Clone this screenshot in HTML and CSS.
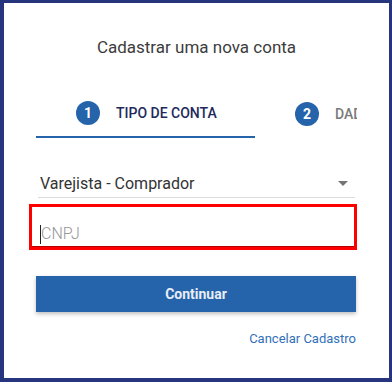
FILE: index.html
```html
<!DOCTYPE html>
<html lang="pt-BR">
<head>
<meta charset="utf-8">
<title>Cadastrar uma nova conta</title>
<link rel="stylesheet" href="styles.css">
</head>
<body>
<div class="frame">
  <div class="column">
    <h1 class="title">Cadastrar uma nova conta</h1>
    <div class="steps">
      <div class="step active">
        <span class="num">1</span>
        <span class="label">TIPO DE CONTA</span>
      </div>
      <div class="step">
        <span class="num">2</span>
        <span class="label muted">DADOS DA EMPRESA</span>
      </div>
    </div>
    <div class="select">
      <span class="value">Varejista - Comprador</span>
      <span class="arrow"></span>
    </div>
    <div class="field-box">
      <span class="caret"></span><span class="placeholder">CNPJ</span>
    </div>
    <button class="btn" type="button">Continuar</button>
    <div class="cancel-row"><a class="cancel" href="#">Cancelar Cadastro</a></div>
  </div>
</div>
</body>
</html>
```

FILE: styles.css
```css
* { box-sizing: border-box; }
html, body { margin: 0; padding: 0; background: #fff; }
body { font-family: Roboto, "Noto Sans", Arial, sans-serif; }

.frame {
  width: 392px;
  height: 382px;
  border: 4px solid #27357f;
  border-top-width: 3px;
  border-right-width: 3px;
  background: #fff;
  padding: 34px 31px 0 32px;
}

.column {
  width: 321px;
  display: flex;
  flex-direction: column;
}

.title {
  margin: 0;
  font-size: 17px;
  line-height: 20px;
  font-weight: 400;
  color: #3c3c3c;
  text-align: center;
}

.steps {
  margin-top: 34px;
  display: flex;
  overflow: hidden;
  width: 321px;
}

.step {
  flex: none;
  width: 219px;
  height: 47px;
  display: flex;
  align-items: center;
  padding-left: 40px;
  padding-bottom: 1px;
}

.step.active { border-bottom: 2px solid #2563aa; }

.num {
  width: 24px;
  height: 24px;
  border-radius: 50%;
  background: #2563aa;
  color: #fff;
  font-size: 14px;
  font-weight: 700;
  display: flex;
  align-items: center;
  justify-content: center;
  flex: none;
}

.label {
  margin-left: 16px;
  font-size: 14px;
  font-weight: 500;
  color: #1e2a5c;
  white-space: nowrap;
}
.label.muted { color: #7a7a7a; }

.select {
  margin: 36px 2px 0;
  display: flex;
  align-items: center;
  justify-content: space-between;
  padding: 0 7px 3px 2px;
  border-bottom: 1px solid #dcdcdc;
}
.value {
  font-size: 16px;
  line-height: 20px;
  color: #333;
}
.arrow {
  width: 0;
  height: 0;
  border-left: 5px solid transparent;
  border-right: 5px solid transparent;
  border-top: 5px solid #757575;
  margin-top: -1px;
}

.field-box {
  margin: 6px 0 0 -7px;
  width: 328px;
  height: 46px;
  border: 3px solid #ff0000;
  box-shadow: inset 0 -1px 0 #b00000;
  padding: 17px 0 0 8px;
  display: flex;
  align-items: flex-start;
}
.caret {
  width: 1px;
  height: 19px;
  background: #222;
  margin-top: 1px;
}
.placeholder {
  font-size: 16px;
  line-height: 20px;
  color: #959595;
  font-weight: 300;
  margin-left: 0;
}

.btn {
  margin-top: 26px;
  width: 320px;
  height: 36px;
  border: 0;
  border-radius: 0;
  background: #2563aa;
  color: #e9eef6;
  font-family: Roboto, "Noto Sans", Arial, sans-serif;
  font-size: 14px;
  font-weight: 700;
  line-height: 36px;
  padding: 0;
  box-shadow: 0 2px 4px rgba(0, 0, 0, 0.25);
}

.cancel-row {
  margin-top: 18px;
  width: 320px;
  text-align: right;
  line-height: 16px;
}
.cancel {
  font-size: 13px;
  color: #3270b8;
  text-decoration: none;
}
```
